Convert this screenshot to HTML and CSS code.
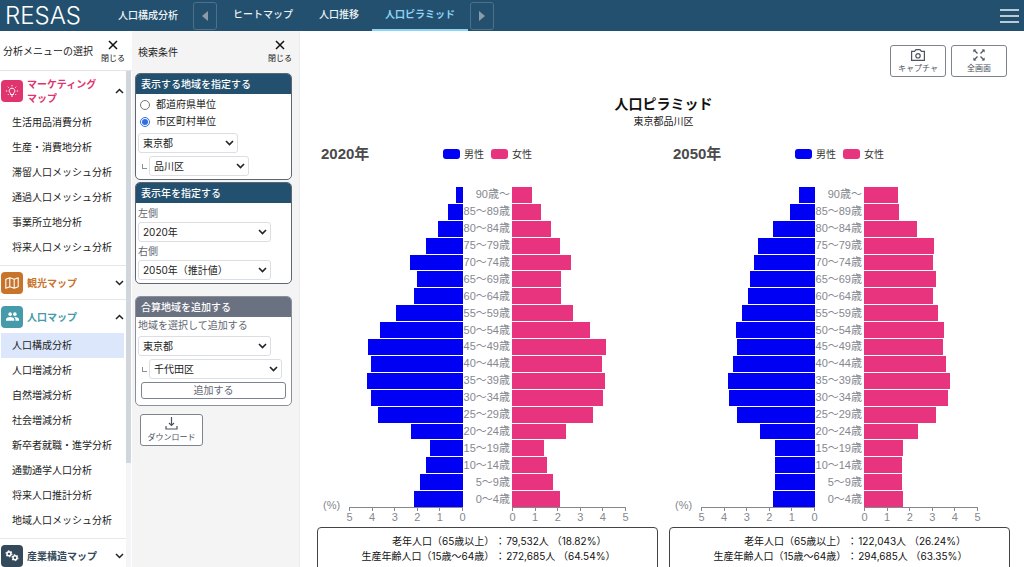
FILE: index.html
```html
<!DOCTYPE html>
<html lang="ja">
<head>
<meta charset="utf-8">
<meta name="viewport" content="width=device-width, initial-scale=1">
<title>RESAS 人口ピラミッド</title>
<link rel="stylesheet" href="styles.css">
</head>
<body>
<header class="topbar">
  <a class="logo" href="#">RESAS</a>
  <span class="topbar-title">人口構成分析</span>
  <button class="nav-arrow" type="button" aria-label="前へ"><svg width="6" height="10" viewBox="0 0 6 10"><path d="M6 0v10L0 5z" fill="currentColor"/></svg></button>
  <nav class="tabs">
    <a class="tab" href="#">ヒートマップ</a>
    <a class="tab" href="#">人口推移</a>
    <a class="tab tab-active" href="#">人口ピラミッド</a>
  </nav>
  <button class="nav-arrow" type="button" aria-label="次へ"><svg width="6" height="10" viewBox="0 0 6 10"><path d="M0 0v10l6-5z" fill="currentColor"/></svg></button>
  <button class="menu-button" type="button" aria-label="メニュー"><svg width="19" height="14" viewBox="0 0 19 14"><path d="M0 1h19M0 7h19M0 13h19" stroke="currentColor" stroke-width="1.5"/></svg></button>
</header>

<div class="layout">
  <aside class="sidebar">
    <div class="side-head">
      <h2 class="side-title">分析メニューの選択</h2>
      <button class="close" type="button"><svg width="10" height="10" viewBox="0 0 10 10"><path d="M1 1l8 8M9 1l-8 8" stroke="currentColor" stroke-width="1.5"/></svg>閉じる</button>
    </div>
    <div class="menu-area">
      <nav class="menu">
        <section class="group">
          <button class="group-head group-tall pink" type="button">
            <span class="badge"><svg width="14" height="14" viewBox="0 0 14 14" fill="none" stroke="currentColor" stroke-width="1"><path d="M5.5 9.2C3.2 7.900 4 4.200 7 4.200s3.800 3.700 1.500 5V10.500h-3zM6 12h2M7 1v1.300M2.800 2.800l.9.9M11.200 2.800l-.9.9M.9 7h1.300M11.800 7h1.300M2.800 11l.8-.8M11.200 11l-.8-.8"/></svg></span>
            <span class="group-name">マーケティング<br>マップ</span>
            <svg class="chev" width="9" height="6" viewBox="0 0 9 6"><path d="M1 5l3.500-3.500L8 5"/></svg>
          </button>
          <ul class="items">
            <li><a class="item" href="#">生活用品消費分析</a></li>
            <li><a class="item" href="#">生産・消費地分析</a></li>
            <li><a class="item" href="#">滞留人口メッシュ分析</a></li>
            <li><a class="item" href="#">通過人口メッシュ分析</a></li>
            <li><a class="item" href="#">事業所立地分析</a></li>
            <li><a class="item" href="#">将来人口メッシュ分析</a></li>
          </ul>
        </section>
        <section class="group">
          <button class="group-head orange" type="button">
            <span class="badge"><svg width="14" height="12" viewBox="0 0 14 12" fill="none" stroke="currentColor" stroke-width="1.1" stroke-linejoin="round"><path d="M.8 2.200L4.800.8l4.400 1.400 4-1.400v9l-4 1.400-4.400-1.400-4 1.400zM4.800.8v9M9.200 2.200v9"/></svg></span>
            <span class="group-name">観光マップ</span>
            <svg class="chev" width="9" height="6" viewBox="0 0 9 6"><path d="M1 1l3.500 3.500L8 1"/></svg>
          </button>
        </section>
        <section class="group">
          <button class="group-head teal" type="button">
            <span class="badge"><svg width="13" height="9" viewBox="0 0 22 14" fill="currentColor"><circle cx="7" cy="3" r="3"/><circle cx="15" cy="3" r="3"/><path d="M0 14v-2.500C0 9.200 4.700 8 7 8s7 1.200 7 3.500V14zM15 8c-.3 0-.6 0-1 .1 1.200.8 2 2 2 3.400V14h6v-2.500C22 9.200 17.300 8 15 8z"/></svg></span>
            <span class="group-name">人口マップ</span>
            <svg class="chev" width="9" height="6" viewBox="0 0 9 6"><path d="M1 5l3.500-3.500L8 5"/></svg>
          </button>
          <ul class="items">
            <li><a class="item item-active" href="#">人口構成分析</a></li>
            <li><a class="item" href="#">人口増減分析</a></li>
            <li><a class="item" href="#">自然増減分析</a></li>
            <li><a class="item" href="#">社会増減分析</a></li>
            <li><a class="item" href="#">新卒者就職・進学分析</a></li>
            <li><a class="item" href="#">通勤通学人口分析</a></li>
            <li><a class="item" href="#">将来人口推計分析</a></li>
            <li><a class="item" href="#">地域人口メッシュ分析</a></li>
          </ul>
        </section>
        <section class="group">
          <button class="group-head slate" type="button">
            <span class="badge"><svg width="14" height="12" viewBox="0 0 16 14" fill="none" stroke="currentColor"><circle cx="4.500" cy="4.500" r="2.300" stroke-width="1.800"/><circle cx="4.500" cy="4.500" r="3.500" stroke-width="1.200" stroke-dasharray="1.830 1.830"/><circle cx="11.500" cy="9" r="2.300" stroke-width="1.800"/><circle cx="11.500" cy="9" r="3.500" stroke-width="1.200" stroke-dasharray="1.830 1.830"/></svg></span>
            <span class="group-name">産業構造マップ</span>
            <svg class="chev" width="9" height="6" viewBox="0 0 9 6"><path d="M1 1l3.500 3.500L8 1"/></svg>
          </button>
        </section>
      </nav>
      <div class="scroll-track"><div class="scroll-thumb"></div></div>
    </div>
  </aside>

  <aside class="filters">
    <div class="side-head">
      <h2 class="side-title">検索条件</h2>
      <button class="close" type="button"><svg width="10" height="10" viewBox="0 0 10 10"><path d="M1 1l8 8M9 1l-8 8" stroke="currentColor" stroke-width="1.5"/></svg>閉じる</button>
    </div>
    <form class="cards">
      <section class="card">
        <h3 class="card-title">表示する地域を指定する</h3>
        <div class="card-body">
          <div class="radios">
            <label class="radio"><input type="radio" name="unit">都道府県単位</label>
            <label class="radio"><input type="radio" name="unit" checked>市区町村単位</label>
          </div>
          <select class="select narrow" aria-label="都道府県"><option>東京都</option></select>
          <div class="child"><span class="elbow"></span><select class="select narrow" aria-label="市区町村"><option>品川区</option></select></div>
        </div>
      </section>
      <section class="card">
        <h3 class="card-title">表示年を指定する</h3>
        <div class="card-body years">
          <label class="label" for="left-year">左側</label>
          <select class="select" id="left-year"><option>2020年</option></select>
          <label class="label" for="right-year">右側</label>
          <select class="select" id="right-year"><option>2050年（推計値）</option></select>
        </div>
      </section>
      <section class="card card-muted">
        <h3 class="card-title">合算地域を追加する</h3>
        <div class="card-body">
          <label class="label" for="add-pref">地域を選択して追加する</label>
          <select class="select" id="add-pref"><option>東京都</option></select>
          <div class="child"><span class="elbow"></span><select class="select" aria-label="追加する市区町村"><option>千代田区</option></select></div>
          <button class="add" type="button">追加する</button>
        </div>
      </section>
      <button class="tool download" type="button"><svg width="13" height="13" viewBox="0 0 13 13" fill="none" stroke="currentColor" stroke-width="1.200"><path d="M6.500 0v8.500M4 6l2.500 2.500L9 6M1 9v3h11V9"/></svg>ダウンロード</button>
    </form>
  </aside>

  <main class="main">
    <div class="tools">
      <button class="tool" type="button"><svg width="14" height="12" viewBox="0 0 14 12" fill="none" stroke="currentColor" stroke-width="1.200"><path d="M.6 2.400h3L5 .7h4l1.400 1.700h3v9H.6z"/><circle cx="7" cy="6.800" r="2.200"/></svg>キャプチャ</button>
      <button class="tool" type="button"><svg width="12" height="12" viewBox="0 0 12 12"><path d="M4.500 4.500L1 1M7.500 4.500L11 1M4.500 7.500L1 11M7.500 7.500L11 11" stroke="currentColor" stroke-width="1.300"/><path d="M.4.400h3l-3 3zM11.600.400v3l-3-3zM.4 11.600v-3l3 3zM11.600 11.600h-3l3-3z" fill="currentColor"/></svg>全画面</button>
    </div>
    <h1 class="title">人口ピラミッド</h1>
    <p class="subtitle">東京都品川区</p>
    <div class="charts">
      <section class="chart" data-year="2020">
        <div class="chart-head">
          <h2 class="year">2020年</h2>
          <div class="legend"><span class="key male">男性</span><span class="key female">女性</span></div>
        </div>
        <div class="plot"></div>
        <div class="summary">
          <span>老年人口（65歳以上）</span><span>：</span><span>79,532人 （18.82%）</span>
          <span>生産年齢人口（15歳〜64歳）</span><span>：</span><span>272,685人 （64.54%）</span>
        </div>
      </section>
      <section class="chart" data-year="2050">
        <div class="chart-head">
          <h2 class="year">2050年</h2>
          <div class="legend"><span class="key male">男性</span><span class="key female">女性</span></div>
        </div>
        <div class="plot"></div>
        <div class="summary">
          <span>老年人口（65歳以上）</span><span>：</span><span>122,043人 （26.24%）</span>
          <span>生産年齢人口（15歳〜64歳）</span><span>：</span><span>294,685人 （63.35%）</span>
        </div>
      </section>
    </div>
  </main>
</div>
<script src="script.js"></script>
</body>
</html>
```

FILE: styles.css
```css
* { box-sizing: border-box; }
body {
  margin: 0;
  height: 100vh;
  display: flex;
  flex-direction: column;
  overflow: hidden;
  font: 10px/15px Inter, "Noto Sans CJK JP", sans-serif;
  color: #222;
  background: #fff;
}
h1, h2, h3, p, ul { margin: 0; padding: 0; font-size: inherit; font-weight: 400; }
ul { list-style: none; }
a { color: inherit; text-decoration: none; }
button, select, input { font: inherit; color: inherit; margin: 0; }
button { padding: 0; border: 0; background: none; }
svg { flex: none; }

/* Top bar */
.topbar {
  flex: none;
  display: flex;
  align-items: center;
  height: 31px;
  padding: 0 5px;
  color: #eef3f6;
  background: #22506e;
  font-weight: 500;
}
.logo { width: 113px; font-size: 24px; line-height: 30px; font-weight: 300; color: #fff; }
.topbar-title { margin-right: 15px; }
.nav-arrow {
  display: flex;
  align-items: center;
  justify-content: center;
  width: 24px;
  height: 28px;
  border: 1px solid #4f7188;
  border-radius: 3px;
  color: #8e9ba5;
}
.tabs { display: flex; align-self: stretch; margin: 0 2px 0 3px; }
.tab { padding: 0 13px; line-height: 28px; border-bottom: 2px solid transparent; }
.tab-active { color: #8fd3f5; border-color: #8fd3f5; font-weight: 700; }
.menu-button { display: flex; margin-left: auto; }

/* Shared columns */
.layout { flex: 1; min-height: 0; display: flex; }
.side-head { flex: none; display: flex; align-items: center; justify-content: space-between; height: 39px; }
.close {
  display: flex;
  flex-direction: column;
  align-items: center;
  gap: 2px;
  font-size: 8px;
  line-height: 12px;
  color: #111;
}

/* Analysis menu */
.sidebar { flex: none; width: 132px; display: flex; flex-direction: column; }
.sidebar .side-head { padding: 2px 7px 0 3px; height: 40px; border-bottom: 1px solid #e2e4e8; }
.menu-area { flex: 1; min-height: 0; display: flex; }
.menu { flex: 1; overflow: hidden; }
.scroll-track { flex: none; width: 5px; margin-right: 1px; background: #f4f5f6; }
.scroll-thumb { height: 79%; background: #d1d5dc; }
.group { border-bottom: 1px solid #e5e7eb; }
.group-head {
  display: flex;
  align-items: center;
  gap: 4px;
  width: 100%;
  height: 33px;
  padding: 0 2px 0 1px;
  text-align: left;
  font-weight: 700;
  line-height: 14px;
}
.group-tall { height: 39px; }
.group-name { flex: 1; white-space: nowrap; }
.badge {
  flex: none;
  display: flex;
  align-items: center;
  justify-content: center;
  width: 22px;
  height: 22px;
  border-radius: 4px;
  background: currentColor;
}
.badge svg { color: #fff; }
.pink { color: #e0346e; }
.orange { color: #c9742b; }
.teal { color: #469bab; }
.slate { color: #34495a; }
.chev { fill: none; stroke: #222; stroke-width: 1.5; }
.items { padding: 0 2px 5px 1px; }
.item { display: block; padding-left: 11px; line-height: 25px; white-space: nowrap; }
.item-active { background: #dce7fb; }

/* Search conditions */
.filters {
  flex: none;
  width: 168px;
  padding: 0 7px 0 3px;
  background: #f4f4f5;
  border-right: 1px solid #ececee;
}
.filters .side-head { padding: 0 0 0 3px; height: 42px; }
.card {
  margin-bottom: 2px;
  border: 1px solid #5d6673;
  border-radius: 5px;
  overflow: hidden;
  background: #fff;
}
.card-title { padding: 0 4px 0 5px; line-height: 20px; color: #fff; background: #22506e; font-weight: 500; }
.card-body { padding: 1px 2px 3px; display: flex; flex-direction: column; gap: 3px; align-items: flex-start; }
.years { gap: 0; }
.years .label { line-height: 18px; }
.card-muted { margin-top: 12px; border-color: #8a909b; }
.card-muted .card-title { background: #6a7180; }
.radios { display: flex; flex-direction: column; padding: 1px 0 0 2px; }
.radio { display: flex; align-items: center; gap: 6px; line-height: 17px; }
.radio input { width: 10px; height: 10px; accent-color: #2f6fe0; }
.label { color: #5f6672; }
.select {
  appearance: none;
  width: 133px;
  height: 20px;
  padding: 0 4px;
  border: 1px solid #dcdee3;
  border-radius: 3px;
  background: #fff url("data:image/svg+xml,%3Csvg xmlns='http://www.w3.org/2000/svg' width='9' height='6'%3E%3Cpath d='M1 1l3.500 3.500L8 1' fill='none' stroke='%23222' stroke-width='1.600'/%3E%3C/svg%3E") no-repeat right 3px center;
}
.narrow { width: 100px; }
.child { display: flex; align-items: center; gap: 2px; padding-left: 4px; }
.elbow { width: 5px; height: 5px; border: solid #8a909b; border-width: 0 0 1px 1px; }
.add {
  width: 145px;
  height: 17px;
  margin: 0 0 3px 3px;
  border: 1px solid #7d838f;
  border-radius: 3px;
  line-height: 15px;
  color: #5f6672;
}
.tool {
  display: flex;
  flex-direction: column;
  align-items: center;
  justify-content: center;
  gap: 1px;
  width: 56px;
  height: 32px;
  border: 1px solid #7d838f;
  border-radius: 3px;
  background: #fff;
  color: #4b5260;
  font-size: 8px;
  line-height: 12px;
}
.download { width: 63px; margin: 8px 0 0 5px; }

/* Pyramids */
.main { flex: 1; min-width: 0; padding: 14px 14px 0 17px; overflow: hidden; }
.tools { display: flex; justify-content: flex-end; gap: 5px; padding-right: 3px; }
.title { margin-top: 17px; font-size: 14px; line-height: 20px; font-weight: 700; text-align: center; color: #111; }
.subtitle { line-height: 14px; text-align: center; }
.charts { display: grid; grid-template-columns: 1fr 1fr; gap: 11px; margin-top: 16px; }
.chart-head { display: grid; grid-template-columns: 1fr auto 1fr; align-items: center; height: 20px; margin-bottom: 23px; }
.year {
  padding-left: 4px;
  font: 700 15px/20px "Liberation Sans", "Noto Sans CJK JP", sans-serif;
  color: #4a4a4a;
}
.legend { display: flex; gap: 7px; color: #333; }
.key { display: flex; align-items: center; gap: 4px; }
.key::before { content: ""; width: 17px; height: 10px; border-radius: 3px; background: currentColor; }
.male::before, .bars-male .bar { background: #0000f5; }
.female::before, .bars-female .bar { background: #e8347f; }
.plot {
  display: grid;
  grid-template-columns: 32px 1fr 49px 1fr 32px;
  grid-template-rows: 320px 20px;
  font: 11px/15px "Liberation Sans", "Noto Sans CJK JP", sans-serif;
  color: #85888f;
}
.unit { grid-area: 1 / 1; align-self: end; margin: 0 0 -6px 6px; }
.bars { grid-row: 1; display: grid; grid-auto-rows: 1fr; gap: 1px; }
.bars-male { grid-column: 2; justify-items: end; }
.bars-female { grid-column: 4; }
.ages { grid-area: 1 / 3; display: grid; grid-auto-rows: 1fr; gap: 1px; align-items: center; padding-right: 2px; text-align: right; white-space: nowrap; }
.axis { grid-row: 2; display: flex; justify-content: space-between; border-top: 1px solid #85888f; line-height: 13px; }
.axis-left { grid-column: 2; flex-direction: row-reverse; }
.axis-right { grid-column: 4; }
.tick { display: flex; flex-direction: column; align-items: center; width: 1px; }
.tick::before { content: ""; flex: none; width: 1px; height: 3px; background: #85888f; }
.summary {
  display: grid;
  grid-template-columns: 52% 10px 1fr;
  column-gap: 1px;
  padding: 6px 0 16px;
  border: 1px solid #444;
  border-radius: 4px;
  color: #111;
  white-space: nowrap;
}
.summary span:nth-child(3n+1) { text-align: right; }
```

FILE: script.js
```js
const ages = ["90歳〜", "85〜89歳", "80〜84歳", "75〜79歳", "70〜74歳", "65〜69歳", "60〜64歳", "55〜59歳", "50〜54歳", "45〜49歳", "40〜44歳", "35〜39歳", "30〜34歳", "25〜29歳", "20〜24歳", "15〜19歳", "10〜14歳", "5〜9歳", "0〜4歳"];

// Share of the total population in percent, oldest group first.
const shares = {
  2020: {
    male: [0.31, 0.66, 1.08, 1.62, 2.32, 2.02, 2.16, 2.95, 3.64, 4.17, 4.04, 4.20, 4.05, 3.74, 2.28, 1.43, 1.61, 1.89, 2.13],
    female: [0.88, 1.29, 1.70, 2.09, 2.60, 2.13, 2.13, 2.66, 3.42, 4.14, 3.95, 4.09, 3.98, 3.55, 2.37, 1.40, 1.54, 1.78, 2.11]
  },
  2050: {
    male: [0.69, 1.10, 1.83, 2.50, 2.68, 2.85, 2.92, 3.20, 3.45, 3.42, 3.60, 3.82, 3.76, 3.42, 2.41, 1.77, 1.75, 1.75, 1.84],
    female: [1.51, 1.54, 2.32, 3.06, 3.04, 3.16, 3.04, 3.23, 3.52, 3.45, 3.60, 3.76, 3.67, 3.17, 2.38, 1.73, 1.65, 1.65, 1.73]
  }
};
const axisMax = 5;

const bars = (side, values) =>
  `<div class="bars bars-${side}">${values.map(v => `<div class="bar" style="width:${(v / axisMax * 100).toFixed(1)}%"></div>`).join("")}</div>`;

const axis = side =>
  `<div class="axis axis-${side}">${[0, 1, 2, 3, 4, 5].map(n => `<span class="tick">${n}</span>`).join("")}</div>`;

document.querySelectorAll(".chart").forEach(chart => {
  const data = shares[chart.dataset.year];
  chart.querySelector(".plot").innerHTML =
    `<span class="unit">(%)</span>` +
    bars("male", data.male) +
    `<div class="ages">${ages.map(a => `<span>${a}</span>`).join("")}</div>` +
    bars("female", data.female) +
    axis("left") + axis("right");
});
```
